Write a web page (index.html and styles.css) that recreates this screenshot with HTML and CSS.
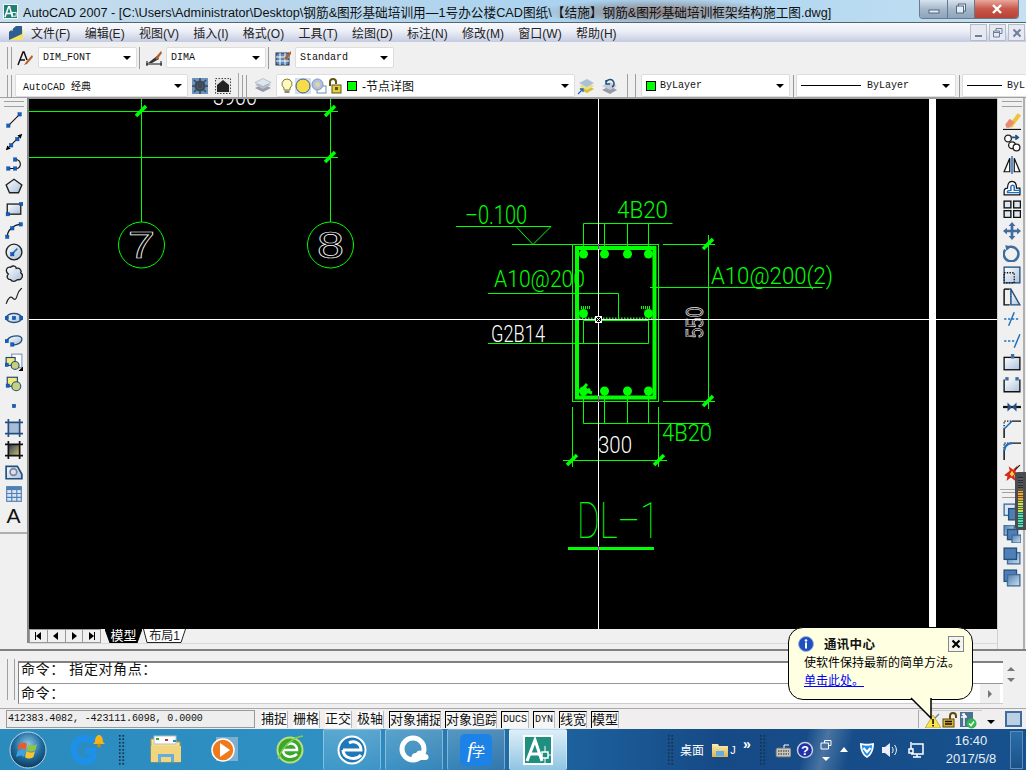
FILE: index.html
```html
<!DOCTYPE html>
<html lang="zh-CN">
<head>
<meta charset="utf-8">
<title>AutoCAD 2007</title>
<link rel="stylesheet" href="styles.css">
</head>
<body>
<svg class="defs" aria-hidden="true"><defs>
<linearGradient id="pale" x1="0" y1="0" x2="1" y2="1"><stop offset="0" stop-color="#fff"/><stop offset="1" stop-color="#a9c0da"/></linearGradient>
<linearGradient id="dark" x1="0" y1="0" x2="1" y2="1"><stop offset="0" stop-color="#23345c"/><stop offset="1" stop-color="#d4c46a"/></linearGradient>
<radialGradient id="orb" cx=".5" cy=".35" r=".7"><stop offset="0" stop-color="#8ecbea"/><stop offset=".55" stop-color="#1e6a9c"/><stop offset="1" stop-color="#0c2f50"/></radialGradient>
<linearGradient id="fold" x1="0" y1="0" x2="0" y2="1"><stop offset="0" stop-color="#fbeeb0"/><stop offset="1" stop-color="#dfb24e"/></linearGradient>
<linearGradient id="sq" x1="0" y1="0" x2="1" y2="1"><stop offset="0" stop-color="#4f7fb4"/><stop offset="1" stop-color="#cfe0ea"/></linearGradient>
</defs></svg>

<div class="app">
  <header class="title">
    <svg class="logo" viewBox="0 0 16 16"><rect width="16" height="16" fill="#fff"/><rect x="1" y="1" width="14" height="14" fill="#1f7f72"/><path class="w15" d="M2 14 6 3h1l3 11M4 10h5"/><rect class="wbox" x="10" y="9" width="4" height="4"/></svg>
    <span class="title-text">AutoCAD 2007 - [C:\Users\Administrator\Desktop\钢筋&amp;图形基础培训用—1号办公楼CAD图纸\【结施】钢筋&amp;图形基础培训框架结构施工图.dwg]</span>
    <div class="winbtns">
      <div class="wb wb-min"><svg viewBox="0 0 12 12" class="wg"><rect x="1" y="7" width="10" height="3" class="wgl"/></svg></div>
      <div class="wb wb-max"><svg viewBox="0 0 12 12" class="wg"><rect x="3.5" y="1" width="7" height="7" class="wgl"/><rect x="1.5" y="3" width="7" height="7" class="wgl"/></svg></div>
      <div class="wb wb-close"><svg viewBox="0 0 12 12" class="wg"><path class="wx" d="M2 2 10 10M10 2 2 10"/></svg></div>
    </div>
  </header>

  <nav class="menu">
    <svg class="menu-ic" viewBox="0 0 16 16"><path d="M1 15V6L10 1l5 4v10z" fill="#f5e15a"/><path d="M1 7 8 1h6v8L1 15z" fill="#2f5f92"/><path d="M4 3l1 1M3 5h2" class="wline"/></svg>
    <span class="mi">文件(F)</span><span class="mi">编辑(E)</span><span class="mi">视图(V)</span><span class="mi">插入(I)</span><span class="mi">格式(O)</span><span class="mi">工具(T)</span><span class="mi">绘图(D)</span><span class="mi">标注(N)</span><span class="mi">修改(M)</span><span class="mi">窗口(W)</span><span class="mi">帮助(H)</span>
    <div class="mdi">
      <div class="mdb"><svg viewBox="0 0 12 12"><rect x="2" y="8" width="7" height="2" fill="#6f7f9a"/></svg></div>
      <div class="mdb"><svg viewBox="0 0 12 12"><path class="mdg" d="M4 3.5V1.5h6v5H8M1.5 4h6v6h-6zM1.5 5.5h6"/></svg></div>
      <div class="mdb"><svg viewBox="0 0 12 12"><path class="mdx" d="M2.5 2.5 9.5 9.5M9.5 2.5 2.5 9.5"/></svg></div>
    </div>
  </nav>

  <section class="tbrow tbrow1">
    <div class="grip"></div>
    <svg class="ic16 ml5" viewBox="0 0 16 16"><path class="k15" d="M1 15 6 2h1l3 8M3 10h5"/><path d="M15 5 9 12l-2 3 3-1 6-7z" fill="#b0602a"/></svg>
    <div class="combo w99 ml5"><span class="mono">DIM_FONT</span><i class="arr"></i></div>
    <div class="sep"></div>
    <svg class="ic16 ml6" viewBox="0 0 16 16"><path class="k1" d="M0 14H16M1 11V16M15 11V16"/><path d="M2 13 11 6l2 3-7 4z" fill="#333"/><path d="M15 1 9 8l2 2 5-7z" fill="#b0602a"/></svg>
    <div class="combo w100 ml4"><span class="mono">DIMA</span><i class="arr"></i></div>
    <div class="sep"></div>
    <svg class="ic16 ml6" viewBox="0 0 16 16"><rect x="1" y="3" width="13" height="12" fill="#5f86b8" stroke="#234"/><path class="wline" d="M1 7h13M1 11h13M5 3v12M10 3v12"/><path d="M16 1 9 8l2 2 5-6z" fill="#b0602a"/></svg>
    <div class="combo w99 ml4"><span class="mono">Standard</span><i class="arr"></i></div>
  </section>

  <section class="tbrow tbrow2">
    <div class="grip"></div>
    <div class="combo w173 ml3 tall pad8"><span class="mono">AutoCAD 经典</span><i class="arr"></i></div>
    <svg class="ic16 ml4" viewBox="0 0 16 16"><rect width="16" height="16" fill="#6d94bd"/><circle cx="8" cy="8" r="5.5" fill="#3c4a58"/><circle cx="8" cy="8" r="2.6" fill="#d8e2ee"/><path class="gear" d="M8 0v16M0 8h16M2 2l12 12M14 2 2 14"/></svg>
    <svg class="ic16 ml7" viewBox="0 0 16 16"><rect x=".5" y=".5" width="15" height="15" class="dots"/><path d="M2 14V7l6-5 6 5v7z" fill="#222"/></svg>
    <div class="divider"></div>
    <div class="grip ml3"></div>
    <svg class="ic18 ml7" viewBox="0 0 18 18"><path d="M1 11 9 7l8 4-8 4z" fill="#99a"/><path d="M1 8 9 4l8 4-8 4z" fill="#b6c0cc"/><path d="M1 5.500 9 1.500l8 4-8 4z" fill="#dfe6ee" stroke="#8899aa" stroke-width=".5"/></svg>
    <div class="combo w299 ml4 tall pad2">
      <svg class="ic16" viewBox="0 0 16 16"><path d="M8 1a5 5 0 0 1 3 9v2H5v-2A5 5 0 0 1 8 1z" fill="#fdf9c0" stroke="#8a7a20"/><rect x="5.500" y="12.500" width="5" height="2.500" fill="#888"/></svg>
      <svg class="ic16" viewBox="0 0 16 16"><rect width="16" height="16" fill="#d5dfea"/><circle cx="8" cy="8" r="7" fill="#f7dc4a" stroke="#2e5fa8"/></svg>
      <svg class="ic16" viewBox="0 0 16 16"><rect x="6" y="8" width="9" height="7" fill="#fff" stroke="#6f8aa8"/><circle cx="6.500" cy="6.500" r="5.500" fill="#b5bfe0" stroke="#7f94b8"/><circle cx="6.500" cy="6.500" r="2.500" fill="#dad8a0"/></svg>
      <svg class="ic16" viewBox="0 0 16 16"><path class="lockb" d="M3 8V4a3 3 0 0 1 6 0v2"/><rect x="5" y="7" width="9" height="8" fill="#e0d040" stroke="#5f5510"/><rect x="8" y="9" width="3" height="3" fill="#5f5510"/></svg>
      <i class="sw sw-first"></i>
      <span class="layer-name">-节点详图</span><i class="arr"></i>
    </div>
    <svg class="ic18 ml2" viewBox="0 0 18 18"><path d="M2 12 10 8l7 4-7 4z" fill="#d8c030"/><path d="M2 9 10 5l7 4-7 4z" fill="#e8e090"/><path d="M2 6 10 2l7 4-7 4z" fill="#aac0d4"/><path d="M1 17 6 12M3 12h3v3" class="blue-line"/></svg>
    <svg class="ic18 ml5" viewBox="0 0 18 18"><path d="M2 13 10 9l7 4-7 4z" fill="#99a"/><path d="M2 9 10 5l7 4-7 4z" fill="#c2ccd8"/><path d="M6 7a4 4 0 1 1 6 3M6 3v4h4" class="blue-line2"/></svg>
    <div class="handle2 ml9"></div>
    <div class="combo w149 ml5 tall"><i class="sw"></i><span class="mono ml4">ByLayer</span><i class="arr"></i></div>
    <div class="sep2"></div>
    <div class="combo w160 tall"><i class="ln ln60"></i><span class="mono ml6">ByLayer</span><i class="arr"></i></div>
    <div class="sep2"></div>
    <div class="combo wrest tall"><i class="ln ln35"></i><span class="mono ml5">ByL</span></div>
  </section>

  <main class="work">
    <aside class="side side-left">
      <div class="shandle"></div>
      <svg class="ic" viewBox="0 0 16 16"><path class="k1" d="M3 13 13 3"/><rect class="n" x="1.500" y="11.500" width="3" height="3"/><rect class="n" x="11.500" y="1.500" width="3" height="3"/></svg>
      <svg class="ic" viewBox="0 0 16 16"><path class="k1" d="M1 15 15 1"/><path d="M1 15l1-4 3 3zM15 1l-4 1 3 3z"/><rect class="n" x="4" y="9.500" width="3" height="3"/><rect class="n" x="9.500" y="4" width="3" height="3"/></svg>
      <svg class="ic" viewBox="0 0 16 16"><path class="k1" d="M3 12H10C15 12 15 4 9 4"/><rect class="n" x="1.500" y="10.500" width="3" height="3"/><rect class="n" x="7.500" y="10.500" width="3" height="3"/><rect class="n" x="7.500" y="2.500" width="3" height="3"/></svg>
      <svg class="ic" viewBox="0 0 16 16"><path class="kp" d="M8 2 15 7 12 14H4L1 7Z"/></svg>
      <svg class="ic" viewBox="0 0 16 16"><rect class="kp" x="2" y="4.500" width="12" height="9"/><rect class="n" x="1" y="12" width="3" height="3"/><rect class="n" x="13" y="3" width="3" height="3"/></svg>
      <svg class="ic" viewBox="0 0 16 16"><path class="k1" d="M2 14C2 8 8 3 14 3"/><rect class="n" x=".5" y="12.500" width="3" height="3"/><rect class="n" x="5" y="5" width="3" height="3"/><rect class="n" x="12.500" y="1.500" width="3" height="3"/></svg>
      <svg class="ic" viewBox="0 0 16 16"><circle class="kp" cx="8" cy="8" r="7"/><path class="blue-line" d="M6 10 11 5"/><rect class="n" x="5" y="8.500" width="3" height="3"/></svg>
      <svg class="ic" viewBox="0 0 16 16"><path class="kp" d="M3 8C0 6 1 1 5 2c2-2 5-1 5 1 3-1 5 2 4 4 3 2 1 7-3 6-2 2-5 2-6 0C2 13 1 10 3 8z"/></svg>
      <svg class="ic" viewBox="0 0 16 16"><path class="k1f" d="M1 15C3 9 5 8 7 10S10 11 11 7 14 2 15 1"/></svg>
      <svg class="ic" viewBox="0 0 16 16"><ellipse class="kp2" cx="8" cy="8" rx="7" ry="4"/><rect class="n" x="0" y="6.500" width="3" height="3"/><rect class="n" x="13" y="6.500" width="3" height="3"/><rect class="n" x="6.500" y="6.500" width="3" height="3"/></svg>
      <svg class="ic" viewBox="0 0 16 16"><path class="kp2" d="M2 9C1 5 14 2 15 7 15 11 9 13 6 12"/><rect class="n" x="0" y="7.500" width="3" height="3"/><rect class="n" x="5" y="10.500" width="3" height="3"/></svg>
      <svg class="ic" viewBox="0 0 16 16"><rect x="6" y="1" width="9" height="12" fill="#fff" stroke="#7f98b8"/><rect x="1" y="4" width="8" height="7" fill="#f0ea78" stroke="#1c3f80"/><circle cx="9" cy="11" r="3.500" fill="#c7cf80" stroke="#24527a"/><rect class="n" x="0" y="9" width="3" height="3"/><path d="M16 16V12l-4 4z"/></svg>
      <svg class="ic" viewBox="0 0 16 16"><rect x="2" y="2" width="9" height="8" fill="#f0ea78" stroke="#1c3f80"/><circle cx="10" cy="10" r="4" fill="#c7cf80" stroke="#24527a"/><rect class="n" x="1" y="8" width="3" height="3"/></svg>
      <svg class="ic" viewBox="0 0 16 16"><rect class="n" x="6.500" y="6.500" width="3" height="3"/></svg>
      <svg class="ic" viewBox="0 0 16 16"><rect x="3" y="3" width="10" height="10" class="hat"/><path class="nv" d="M0 3H16M0 13H16M3 0V16M13 0V16"/></svg>
      <svg class="ic" viewBox="0 0 16 16"><rect x="3" y="3" width="10" height="10" fill="url(#dark)"/><path class="kk" d="M0 3H16M0 13H16M3 0V16M13 0V16"/></svg>
      <svg class="ic" viewBox="0 0 16 16"><path class="reg" d="M1 3H11L15 10V14H1Z"/><circle class="regc" cx="7.500" cy="8" r="3"/></svg>
      <svg class="ic" viewBox="0 0 16 16"><rect x="1.500" y="1.500" width="13" height="13" fill="#d8e4f4" stroke="#4f7fb4"/><rect x="1.500" y="1.500" width="13" height="3" fill="#4f7fb4"/><path class="tabl" d="M1.500 7.500h13M1.500 11h13M6 4.500v10M10.500 4.500v10"/></svg>
      <span class="glyphA">A</span>
      <div class="sbot"></div>
    </aside>

    <div class="center">
      <svg class="cad" viewBox="29 99 968 530" aria-label="drawing">
        <rect class="bk" x="29" y="99" width="968" height="530"/>
        <rect class="wh" x="929" y="99" width="7" height="530"/>
        <g class="g1">
          <path d="M29 111.500H338M29 157.500H338M141.500 99V222M330.500 99V222"/>
          <circle cx="141.500" cy="245" r="23"/>
          <circle cx="330.500" cy="245" r="23"/>
          <path d="M456 226.500H551M516 226.500 533 244.500 551 226.500M512 244.500H572.500"/>
          <rect x="572.500" y="244.500" width="86" height="157"/>
          <path d="M583.500 223.500H672.500M583.500 223.500V254M604.500 223.500V254M627.500 223.500V254M648.500 223.500V254"/>
          <path d="M663 244.500H715M663 401.500H715M708.500 235V409"/>
          <path d="M650 287.500H822.500"/>
          <path d="M488 293.500H618.500V318"/>
          <path d="M583.500 320.500H648.500M488 343.500H648.500V320.500M583.500 320.500V343.500"/>
          <path d="M583.500 391V423.500H709M604.500 391V423.500M627.500 391V423.500M648.500 391V423.500"/>
          <path d="M572.500 407V467M658.500 407V467M563 460.500H667"/>
        </g>
        <rect class="thick" x="577" y="248" width="77.500" height="149.500"/>
        <g class="bars">
          <circle cx="583.500" cy="254" r="4.500"/><circle cx="604.500" cy="254" r="4.500"/><circle cx="627.500" cy="254" r="4.500"/><circle cx="648.500" cy="254" r="4.500"/>
          <circle cx="583.500" cy="313.500" r="4.500"/><circle cx="648.500" cy="313.500" r="4.500"/>
          <circle cx="583.500" cy="391" r="4.500"/><circle cx="604.500" cy="391" r="4.500"/><circle cx="627.500" cy="391" r="4.500"/><circle cx="648.500" cy="391" r="4.500"/>
        </g>
        <path class="hook" d="M580 392 587 384M583 390 592 393M582 396 590 389"/>
        <path class="dot" d="M579 318.500H655"/>
        <path class="dot2" d="M581 307.500H591M641 307.500H651M578 310V318M654 310V318"/>
        <path class="tick" d="M136 116 146 106M325 116 335 106M325 162 335 152M703 249 713 239M703 406 713 396M567 465 577 455M654 465 664 455"/>
        <rect class="und" x="568" y="547" width="86" height="3"/>
        <text class="ct g" x="465" y="224" font-size="25" textLength="62" lengthAdjust="spacingAndGlyphs">–0.100</text>
        <text class="ct g" x="617" y="218" font-size="24" textLength="51" lengthAdjust="spacingAndGlyphs">4B20</text>
        <text class="ct g" x="494" y="287" font-size="24" textLength="91" lengthAdjust="spacingAndGlyphs">A10@200</text>
        <text class="ct g" x="711" y="284" font-size="24" textLength="122" lengthAdjust="spacingAndGlyphs">A10@200(2)</text>
        <text class="ct g" x="662" y="441" font-size="24" textLength="50" lengthAdjust="spacingAndGlyphs">4B20</text>
        <text class="ct g thin" x="577" y="538" font-size="50" textLength="82" lengthAdjust="spacingAndGlyphs">DL–1</text>
        <text class="ct w" x="491" y="342" font-size="24" textLength="54" lengthAdjust="spacingAndGlyphs">G2B14</text>
        <text class="ct w" x="598" y="453" font-size="24" textLength="34" lengthAdjust="spacingAndGlyphs">300</text>
        <text class="ct w" x="213" y="105" font-size="24" textLength="44" lengthAdjust="spacingAndGlyphs">3900</text>
        <text class="ol" x="128" y="258" font-size="37" textLength="27" lengthAdjust="spacingAndGlyphs">7</text>
        <text class="ol" x="317" y="258" font-size="37" textLength="27" lengthAdjust="spacingAndGlyphs">8</text>
        <text class="ol" transform="translate(703 338) rotate(-90)" font-size="24" textLength="31" lengthAdjust="spacingAndGlyphs">550</text>
        <path class="cross" d="M29 319.500H997M598.500 99V629"/>
        <rect class="pick" x="595.500" y="316.500" width="6" height="6"/>
        <path class="pickx" d="M595.500 316.500 601.500 322.500M601.500 316.500 595.500 322.500"/>
        <path class="mag" d="M598.500 244V249M598.500 396V402M598.500 546V550"/>
      </svg>
      <div class="tabs">
        <div class="navs">
          <span class="nb"><svg viewBox="0 0 10 10"><path d="M2 1h1v8H2zM8 1v8L3 5z"/></svg></span>
          <span class="nb"><svg viewBox="0 0 10 10"><path d="M7 1v8L2 5z"/></svg></span>
          <span class="nb"><svg viewBox="0 0 10 10"><path d="M3 1v8l5-4z"/></svg></span>
          <span class="nb"><svg viewBox="0 0 10 10"><path d="M2 1v8l5-4zM7 1h1v8H7z"/></svg></span>
        </div>
        <span class="tab tab-on"><svg class="tabshape" viewBox="0 0 37 14"><path class="ts-on" d="M0 0 5 14H32L37 0"/></svg><b class="tabt">模型</b></span>
        <span class="tab tab-off"><svg class="tabshape" viewBox="0 0 43 14"><path class="ts-off" d="M.5 0 4 13.500H38L42.500 0"/></svg><b class="tabt">布局1</b></span>
      </div>
    </div>

    <aside class="side side-right">
      <div class="shandle"></div>
      <svg class="ic" viewBox="0 0 16 16"><path d="M5 12 13 1l3 2-8 11z" fill="#efc23a"/><path d="M2 11 6 6l4 3-4 5H3z" fill="#e88a72"/><path class="k1" d="M0 15.500H16"/></svg>
      <svg class="ic" viewBox="0 0 16 16"><circle class="kc" cx="4.500" cy="4" r="3"/><circle class="kc" cx="8" cy="10" r="3"/><circle class="kc" cx="12" cy="12" r="3"/><path class="blue-line2" d="M7 3H13M11 1l2.500 2L11 5"/></svg>
      <svg class="ic" viewBox="0 0 16 16"><path class="kn" d="M6 2 1 14H6ZM10 2 15 14H10Z"/><path class="blue-line" d="M8 0V16"/></svg>
      <svg class="ic" viewBox="0 0 16 16"><path class="kn" d="M1 15V12C1 9 3 9 4 9 4 6 5 3 8 3S12 6 12 9H15V15Z"/><path class="blue-line" d="M4 13V12C4 11 6 11 7 11V8C7 6 10 6 10 8V11H15V13Z"/></svg>
      <svg class="ic" viewBox="0 0 16 16"><rect class="kn2" x="1" y="1" width="6" height="6"/><rect class="kn2" x="9.500" y="1" width="6" height="6"/><rect class="kn2" x="1" y="9.500" width="6" height="6"/><rect class="kn2" x="9.500" y="9.500" width="6" height="6"/></svg>
      <svg class="ic" viewBox="0 0 16 16"><path d="M8 0 11 3.500H9.200V6.800H12.500V5L16 8 12.500 11V9.200H9.200V12.500H11L8 16 5 12.500H6.800V9.200H3.500V11L0 8 3.500 5V6.800H6.800V3.500H5Z" fill="#3f6d9f"/></svg>
      <svg class="ic" viewBox="0 0 16 16"><path class="rot" d="M6 2.500A6.500 6.500 0 1 1 2 5"/><path d="M2 1 8 2 3 6z" fill="#3f6d9f"/></svg>
      <svg class="ic" viewBox="0 0 16 16"><rect class="regf" x="1" y="1" width="14" height="14"/><rect class="dotk" x="1" y="6" width="9" height="9"/></svg>
      <svg class="ic" viewBox="0 0 16 16"><path class="kk2" d="M1 1V15H6"/><path class="kk2" d="M1 1H6"/><path class="regf" d="M7 1 15 15H7Z"/><path class="dotb" d="M7 1V15"/></svg>
      <svg class="ic" viewBox="0 0 16 16"><path class="blue-dash" d="M1 8H15"/><path class="blue-line" d="M5 14 10 2"/></svg>
      <svg class="ic" viewBox="0 0 16 16"><path class="blue-dash" d="M1 8H10"/><path class="blue-line" d="M10 14 15 2"/></svg>
      <svg class="ic" viewBox="0 0 16 16"><rect class="kf" x="1" y="3" width="14" height="11"/><rect class="nl" x="7" y="0" width="3" height="4"/></svg>
      <svg class="ic" viewBox="0 0 16 16"><path class="kf" d="M1 3V14H15V3"/><rect class="nl" x="2" y="1" width="3" height="3"/><rect class="nl" x="11" y="1" width="3" height="3"/></svg>
      <svg class="ic" viewBox="0 0 16 16"><path class="k2" d="M0 8H16"/><path d="M4 4 8 8 4 12zM12 4 8 8 12 12z" fill="#24507f"/></svg>
      <svg class="ic" viewBox="0 0 16 16"><path class="kk2" d="M1 16V8M8 1H16"/><path class="dotk" d="M1 8V1H8"/><path class="blue-line" d="M1 8 8 1"/></svg>
      <svg class="ic" viewBox="0 0 16 16"><path class="kk2" d="M1 16V8M8 1H16"/><path class="dotk" d="M1 8V1H8"/><path class="blue-thick" d="M1 8C1 4 4 1 8 1"/></svg>
      <svg class="ic" viewBox="0 0 16 16"><path d="M1 10 6 6 5 2 9 5 13 1 11 7 15 9 10 10 11 15 7 12 3 15 4 11z" fill="#d62a1a"/><path d="M6 9 8 6 10 9 8 11z" fill="#f6d94a"/><path class="k1" d="M11 5 15 1"/></svg>
      <div class="subdiv"></div>
      <div class="shandle"></div>
      <svg class="ic" viewBox="0 0 16 16"><rect class="oS" x="1" y="1" width="10" height="10"/><rect class="oB" x="5" y="5" width="10" height="10"/></svg>
      <svg class="ic" viewBox="0 0 16 16"><rect class="oL" x="1" y="0" width="9" height="9"/><rect class="oB" x="4" y="4" width="9" height="9"/><rect class="oL" x="8" y="9" width="8" height="7"/></svg>
      <svg class="ic" viewBox="0 0 16 16"><rect class="oL" x="4" y="5" width="11" height="10"/><rect class="oB" x="1" y="1" width="11" height="10"/></svg>
      <svg class="ic" viewBox="0 0 16 16"><rect class="oB" x="1" y="1" width="11" height="10"/><rect class="oL" x="4" y="5" width="11" height="10"/></svg>
    </aside>
  </main>

  <section class="cmd">
    <div class="cmd-grip"></div>
    <div class="cmd-box">
      <div class="cmd-line cmd-hist">命令： 指定对角点：</div>
      <div class="cmd-line cmd-now"><span>命令：</span><span class="hscroll"><i class="rgt"></i></span></div>
    </div>
    <div class="cmd-scroll"><i class="up"></i><i class="down"></i></div>
  </section>

  <section class="status">
    <div class="coords">412383.4082, -423111.6098, 0.0000</div>
    <span class="sb s27">捕捉</span><span class="sb s27">栅格</span><span class="sb s27">正交</span><span class="sb s27">极轴</span>
    <span class="sb on s52">对象捕捉</span><span class="sb on s52">对象追踪</span><span class="sb on s28 mono">DUCS</span><span class="sb on s22 mono">DYN</span><span class="sb on s28">线宽</span><span class="sb on s28">模型</span>
    <div class="tray">
      <svg class="ic16" viewBox="0 0 16 16"><path d="M2 2 14 14M14 2 2 14" class="tr-x"/><path d="M8 3 16 16H0Z" fill="#fbe34a" stroke="#8a7a20" stroke-width=".5"/><rect x="7.300" y="7" width="1.500" height="5"/><rect x="7.300" y="13" width="1.500" height="1.500"/></svg>
      <svg class="ic16" viewBox="0 0 16 16"><path class="lockb2" d="M8 7V4a3 3 0 0 1 6 0v2"/><rect x="1" y="7" width="11" height="8" fill="#d9b430" stroke="#5f4a10"/><path class="kk" d="M3 9.500h7M3 12h7"/></svg>
      <svg class="ic18" viewBox="0 0 18 18"><rect x="1" y="1" width="13" height="15" fill="#4a7094"/><path class="wline2" d="M5 2V15M2 6h6M3 3l4 2"/><circle cx="12.500" cy="12.500" r="5" fill="#2db84a"/><path class="wline2" d="M10 12.500l2 2 3-4"/></svg>
    </div>
    <i class="arr st-arr"></i>
    <div class="clean"></div>
  </section>

  <footer class="taskbar">
    <div class="pins">
      <div class="pin p-orb"><svg class="orb" viewBox="0 0 38 38"><circle cx="19" cy="19" r="18" fill="url(#orb)" stroke="#b8d8e8"/><path d="M10 13c3-2 6-2 8 0l-1.500 6c-2-2-5-2-8 0z" fill="#ea5b2a"/><path d="M19 13c3 2 6 2 9 0l-1.500 6c-3 2-6 2-8.500 0z" fill="#8fc53f"/><path d="M8.500 20c3-2 6-2 8 0L15 26c-2-2-5-2-8 0z" fill="#3ba3e0"/><path d="M17.500 20c3 2 6 2 8.500 0L24.500 26c-3 2-6 2-8.500 0z" fill="#f9c52a"/></svg></div>
      <div class="pin p-g"><svg class="pic40" viewBox="0 0 40 40"><path class="g-logo" d="M28 12C24 6 10 7 9 19 8 31 22 35 28 28V21H20"/><path d="M30 12c0-5 2-7 4-7s4 2 4 7l2 2H28z" fill="#f4b41a"/><circle cx="34" cy="15.500" r="2" fill="#c98a10"/></svg></div>
      <div class="pin p-grip"><i class="dotgrip"></i></div>
      <div class="pin p-fold"><svg class="pic32" viewBox="0 0 32 32"><path d="M1 5h12l2 3h15v20H1z" fill="url(#fold)" stroke="#b99540"/><rect x="4" y="2" width="22" height="8" fill="#fff" stroke="#bbb"/><rect x="6" y="4" width="3" height="2" fill="#3a3"/><rect x="15" y="5" width="3" height="2" fill="#b33"/><rect x="23" y="6" width="3" height="2" fill="#28c"/><path d="M1 12h30v16H1z" fill="#f2d57f"/><path d="M8 28v-8h16v8h-3v-5H11v5z" fill="#62aee0"/></svg></div>
      <div class="pin p-media"><svg class="pic32" viewBox="0 0 32 32"><rect x="7" y="3" width="22" height="24" fill="#9ab8d4" opacity=".75"/><circle cx="14" cy="16" r="11" fill="#ef7a1c" stroke="#fff" stroke-width="1.500"/><path d="M11 9 21 16 11 23z" fill="#fff"/></svg></div>
      <div class="pin p-ie"><svg class="pic32" viewBox="0 0 32 32"><circle cx="16" cy="16" r="12.500" fill="#3aa72e" stroke="#bde07a" stroke-width="2"/><path class="ie-e" d="M9 16H23C23 10 17 8 13 11M9 16C9 23 18 25 23 20"/><path class="ie-orb" d="M4 25C9 11 20 3 29 2"/></svg></div>
      <div class="task"><svg class="pic32" viewBox="0 0 32 32"><circle cx="16" cy="16" r="13.500" class="ie-ring"/><path class="ie-e2" d="M7 16H25C25 9 18 6 13 9M7 16C7 25 20 27 25 21"/></svg></div>
      <div class="task"><svg class="pic32" viewBox="0 0 32 32"><circle cx="15" cy="15" r="11" class="q-ring"/><path d="M14 25a4 4 0 0 1 4-6 5 5 0 0 1 9 1 3 3 0 0 1 1 6H15z" fill="#fff"/></svg></div>
      <div class="task"><div class="xue"><span class="xue-f">f</span><span class="xue-t">学</span></div></div>
      <div class="task task-last"><svg class="pic32" viewBox="0 0 32 32"><rect x="1" y="1" width="30" height="30" fill="#fff"/><rect x="3" y="3" width="26" height="26" fill="#1f8f80"/><path class="w3" d="M5 27 13 6 20 27M8 20H19"/><rect class="wbox2" x="20" y="18" width="6" height="6"/><path class="wline" d="M16 21h4M26 21h3M23 18v-6M23 24v5"/></svg></div>
    </div>
    <div class="sysbar">
      <i class="dotgrip dg1"></i>
      <span class="tb-desk">桌面</span>
      <svg class="ic16 tb-f" viewBox="0 0 16 16"><path d="M0 2h6l1 2h9v11H0z" fill="url(#fold)"/><rect x="4" y="9" width="8" height="5" fill="#62aee0"/></svg>
      <span class="tb-j">J</span>
      <span class="tb-more">»</span>
      <i class="dotgrip dg2"></i>
      <svg class="ic16 t-kbd" viewBox="0 0 16 16"><rect x="1" y="6" width="15" height="9" rx="1.500" fill="#c8c8c0" stroke="#666"/><path class="kbdk" d="M3 9h11M3 12h11"/><path class="wline" d="M9 6V3h5"/></svg>
      <svg class="ic18 t-help" viewBox="0 0 18 18"><circle cx="9" cy="9" r="7.500" fill="#2030a8" stroke="#c8d0d8" stroke-width="1.500"/><text class="q" x="9" y="13.500">?</text></svg>
      <div class="t-small"><svg class="ic12" viewBox="0 0 12 12"><path class="wline" d="M4.500 4V1.500H11v5H8.500M1 4h7.500v6H1z"/></svg><i class="dn"></i></div>
      <i class="upt"></i>
      <svg class="ic18 t-sh" viewBox="0 0 18 18"><path d="M2 2C6 3 12 3 16 2 16 9 14 14 9 17 4 14 2 9 2 2Z" fill="#fff"/><path d="M4 4C7 5 11 5 14 4 14 9 12 13 9 15 6 13 4 9 4 4Z" fill="#1f8be8"/><path class="wth" d="M5.500 7 9 11l3.500-4"/></svg>
      <svg class="ic18 t-sp" viewBox="0 0 18 18"><path d="M1 6h3l5-4v14l-5-4H1z" fill="#eef"/><path class="wline" d="M11 6c1.500 2 1.500 4 0 6M13.500 4c2.500 3 2.500 7 0 10"/></svg>
      <svg class="ic18 t-nw" viewBox="0 0 18 18"><path class="wline2" d="M5 3h11v10H4M10 13v3H6h8M4 8V1M2 8h4v4H2z"/></svg>
      <div class="clock"><span>16:40</span><span>2017/5/8</span></div>
      <div class="showdesk"></div>
    </div>
  </footer>

  <div class="meter"><i class="meter-bars"></i></div>

  <aside class="bubble">
    <svg class="b-tail" viewBox="0 0 24 22"><path class="b-tail-f" d="M1 0 21 20 21 0Z"/><path class="b-tail-s" d="M1 0 21 20 21 0"/></svg>
    <div class="b-head">
      <svg class="b-info" viewBox="0 0 16 16"><circle cx="8" cy="8" r="7.500" fill="#1e50c0" stroke="#9db4dc"/><circle cx="8" cy="4.500" r="1.300" fill="#fff"/><rect x="7" y="6.500" width="2" height="6" fill="#fff"/></svg>
      <strong class="b-title">通讯中心</strong>
      <span class="b-close"><svg viewBox="0 0 10 10"><path class="b-x" d="M1.500 1.500 8.500 8.500M8.500 1.500 1.500 8.500"/></svg></span>
    </div>
    <p class="b-msg">使软件保持最新的简单方法。</p>
    <a class="b-link" href="#">单击此处。</a>
  </aside>
</div>
</body>
</html>
```

FILE: styles.css
```css
*{box-sizing:border-box}
html,body{margin:0;padding:0;width:1026px;height:770px;overflow:hidden;background:#f0f0f0}
body{font-family:"Liberation Sans","Noto Sans CJK SC",sans-serif;font-size:12px;color:#111}
.defs{position:absolute;width:0;height:0}
.app{position:relative;width:1026px;height:770px;display:flex;flex-direction:column;overflow:hidden}

.title{height:22px;display:flex;align-items:center;padding-left:3px;
  background:radial-gradient(ellipse 125px 13px at 660px 12px,rgba(120,70,50,.62),rgba(120,70,50,0) 100%),linear-gradient(90deg,#c6deef,#b8d6ec 30%,#a7d2f0 60%,#c5e0f2 100%)}
.logo{width:15px;height:15px;flex:none}
.title-text{margin-left:5px;font-size:12.68px;color:#111;white-space:nowrap}
.winbtns{margin-left:auto;margin-right:7px;display:flex;align-self:flex-start;height:19px;flex:none;border:1px solid #6b7b8d;border-top:0;border-radius:0 0 4px 4px;overflow:hidden}
.wb{display:flex;align-items:center;justify-content:center;height:100%;background:linear-gradient(#d8e3ee,#a5b8cb 50%,#8ea4ba)}
.wb-min{width:28px;border-right:1px solid #66788c}
.wb-max{width:27px;border-right:1px solid #66788c}
.wb-close{width:43px;background:linear-gradient(#e8a89c,#c8574a 50%,#b84134)}
.wg{width:12px;height:12px}
.wgl{fill:#e6edf4;stroke:#54687e}
.wx{fill:none;stroke:#fff;stroke-width:2.4}

.menu{height:20px;display:flex;align-items:center;gap:14.3px;padding-left:8px;border-top:1px solid #566;background:linear-gradient(#f8f9fd,#eef0f8 40%,#c4cce2)}
.menu-ic{width:16px;height:16px;flex:none;margin-right:-7.300px}
.mi{font-size:12px;white-space:nowrap;color:#222}
.mdi{margin-left:auto;display:flex;gap:2px;margin-right:1px}
.mdb{width:17px;height:17px;border:1px solid #b4bccc;background:#e6e9f2;display:flex;align-items:center;justify-content:center}
.mdb svg{width:12px;height:12px}
.mdg{fill:none;stroke:#6f7f9a}
.mdx{fill:none;stroke:#6f7f9a;stroke-width:2}

.tbrow{display:flex;align-items:center;background:#f0f0f0;padding-left:7px}
.tbrow1{height:29px;padding-top:2px}
.tbrow2{height:27px;padding-top:3px;border-bottom:1px solid #a0a0a0}
.grip{width:5px;height:22px;flex:none;border-left:1px solid #a0a0a0;border-right:1px solid #a0a0a0}
.handle2{width:9px;height:24px;flex:none;border-left:1px solid #a0a0a0;border-right:1px solid #a0a0a0}
.sep,.sep2{width:1px;height:22px;background:#999;flex:none}
.sep{margin-left:2px}
.sep2{margin:0 2.500px}
.divider{width:1px;height:26px;background:#aaa;flex:none;margin-left:7px}
.combo{height:21px;flex:none;background:#fff;border:1px solid #ddd;border-radius:2px;display:flex;align-items:center;padding-left:4px;padding-right:5px;overflow:hidden}
.combo.tall{height:23px}
.combo.pad8{padding-left:7px}
.combo.pad2{padding-left:2px}
.w99{width:99px}.w100{width:100px}.w173{width:173px}.w299{width:299px}.w149{width:149px}.w160{width:160px}.wrest{width:64px;border-right:0}
.mono{font-family:"Liberation Mono","Noto Sans CJK SC",monospace;font-size:10px;white-space:nowrap;color:#111}
.arr{margin-left:auto;width:0;height:0;border-left:4px solid transparent;border-right:4px solid transparent;border-top:4px solid #000;flex:none}
.ml2{margin-left:2px}.ml3{margin-left:3px}.ml4{margin-left:4px}.ml5{margin-left:5px}.ml6{margin-left:6px}.ml7{margin-left:7px}.ml9{margin-left:9px}
.ic16{width:16px;height:16px;flex:none}
.ic18{width:18px;height:18px;flex:none}
.ic12{width:12px;height:12px;flex:none;display:block}
.sw{width:10px;height:10px;background:#0f0;border:1px solid #000;flex:none}
.sw-first{margin-left:4px}
.layer-name{font-size:12px;margin-left:5px;white-space:nowrap}
.ln{height:1px;background:#000;flex:none;display:block}
.ln60{width:60px}.ln35{width:35px}

.work{height:551px;display:flex;align-items:flex-start;background:#f0f0f0}
.side{display:flex;flex-direction:column;align-items:center;flex:none}
.side-left{width:29px;height:545px;padding-top:3px;border-right:2px solid #888}
.side-left .shandle{margin-bottom:2px}
.side-right{width:29px;padding:3px 3px 0 2px;height:551px;border-left:1px solid #d0d0d0}
.side-right::after{content:"";position:absolute;left:1023px;top:98px;width:2px;height:551px;background:#b0b0b0}
.shandle{width:20px;height:6px;border-top:1px solid #a0a0a0;border-bottom:1px solid #a0a0a0;flex:none;margin-bottom:3px}
.ic{width:18px;height:18px;margin:2px 0;flex:none}
.glyphA{font-size:21px;height:22px;line-height:22px;color:#111}
.sbot{width:100%;height:2px;background:#b0b0b0;margin-top:5px;flex:none}
.subdiv{width:100%;height:1px;background:#aaa;margin:5px 0 2px;flex:none}

.n{fill:#1160c4;stroke:#0a3f8a;stroke-width:.4}
.nl{fill:#3f6d9f}
.k1{fill:none;stroke:#111;stroke-width:1}
.k1f{fill:none;stroke:#222;stroke-width:1}
.k15{fill:none;stroke:#111;stroke-width:1.500}
.k2{fill:none;stroke:#111;stroke-width:2}
.kk{fill:none;stroke:#111;stroke-width:1.500}
.kk2{fill:none;stroke:#111;stroke-width:1.300}
.kp{fill:url(#pale);stroke:#222;stroke-width:1.200}
.kp2{fill:url(#pale);stroke:#24527a;stroke-width:1.200}
.kc{fill:#fff;stroke:#222;stroke-width:1.200}
.kn{fill:#fff;stroke:#111;stroke-width:1.100}
.kn2{fill:#dce7f2;stroke:#111;stroke-width:1.200}
.kf{fill:url(#pale);stroke:#111;stroke-width:1.200}
.blue-line{fill:none;stroke:#1f6fc0;stroke-width:1.300}
.blue-line2{fill:none;stroke:#24507f;stroke-width:1.500}
.blue-thick{fill:none;stroke:#1f6fc0;stroke-width:2}
.blue-dash{fill:none;stroke:#1f6fc0;stroke-width:1.200;stroke-dasharray:2 1.500}
.hat{fill:#a8bcd8;stroke:none}
.nv{fill:none;stroke:#24507f;stroke-width:1.500}
.reg{fill:url(#pale);stroke:#24507f;stroke-width:1.500}
.regc{fill:#dde;stroke:#789;stroke-width:1.500}
.regf{fill:url(#pale);stroke:#24507f;stroke-width:1.200}
.tabl{fill:none;stroke:#4f7fb4;stroke-width:1}
.rot{fill:none;stroke:#3f6d9f;stroke-width:2.200}
.dotk{fill:none;stroke:#111;stroke-width:1.200;stroke-dasharray:1.200 1.200}
.dotb{fill:none;stroke:#24507f;stroke-width:1;stroke-dasharray:1 1}
.oS{fill:#dce7f2;stroke:#3f6d9f;stroke-width:1.200}
.oB{fill:#4f7fb4;stroke:#24507f;stroke-width:1.200}
.oL{fill:url(#sq);stroke:#3f6d9f;stroke-width:1.200}
.gear{stroke:#3c4a58;stroke-width:1.600;fill:none}
.dots{fill:#e6e6e6;stroke:#444;stroke-dasharray:1.500 1.500}
.lockb{fill:none;stroke:#5f5510;stroke-width:2}
.wline{fill:none;stroke:#fff;stroke-width:1}
.wline2{fill:none;stroke:#fff;stroke-width:1.500}
.w15{fill:none;stroke:#fff;stroke-width:1.600}
.w3{fill:none;stroke:#fff;stroke-width:3}
.wbox{fill:#1f7f72;stroke:#fff}
.wbox2{fill:#1f8f80;stroke:#fff;stroke-width:1.500}

.center{width:968px;flex:none;display:flex;flex-direction:column;border-top:1px solid #a0a0a0}
.cad{display:block;width:968px;height:530px;flex:none}
.bk{fill:#000}.wh{fill:#fff}
.g1{fill:none;stroke:#0f0;stroke-width:1}
.thick{fill:none;stroke:#0f0;stroke-width:4}
.bars circle{fill:#0f0}
.hook{fill:none;stroke:#0f0;stroke-width:3}
.dot{fill:none;stroke:#0f0;stroke-width:2;stroke-dasharray:1.500 1.500}
.dot2{fill:none;stroke:#0f0;stroke-width:3;stroke-dasharray:1 1}
.tick{fill:none;stroke:#0f0;stroke-width:3.500}
.und{fill:#0f0}
.ct{font-family:Roboto,"Liberation Sans",sans-serif;font-weight:300}
.ct.thin{font-weight:100}
.ct.g{fill:#0f0}
.ct.w{fill:#fff}
.ol{font-family:"Liberation Sans",sans-serif;fill:#000;stroke:#fff;stroke-width:.7}
.cross{fill:none;stroke:#fff;stroke-width:1}
.pick{fill:#000;stroke:#fff}
.pickx{fill:none;stroke:#fff;stroke-width:1}
.mag{fill:none;stroke:#f0f;stroke-width:1}

.tabs{height:15px;display:flex;align-items:flex-start;background:#f0f0f0;border-bottom:1px solid #d8d8d8}
.navs{display:flex;width:72px;height:14px;border:1px solid #999;background:#f0f0f0;flex:none}
.nb{flex:1;border-right:1px solid #999;display:flex;align-items:center;justify-content:center}
.nb:last-child{border-right:0}
.nb svg{width:10px;height:10px}
.tab{position:relative;height:14px;line-height:14px;font-size:13px;text-align:center;flex:none;display:block}
.tabshape{position:absolute;left:0;top:0;width:100%;height:14px}
.ts-on{fill:#000;stroke:#000}
.ts-off{fill:#fff;stroke:#222}
.tabt{position:relative;font-weight:normal}
.tab-on{width:37px;margin-left:4px;color:#fff}
.tab-off{width:43px;margin-left:1px;color:#222;font-size:12px}

.cmd{height:59px;display:flex;align-items:flex-start;border-top:2px solid #808080;padding:10px 8px 0 7px;background:#f0f0f0}
.cmd-grip{width:8px;height:41px;flex:none;border-left:1px solid #a0a0a0;border-right:1px solid #a0a0a0;margin-top:-2px}
.cmd-box{margin-left:3px;width:985px;height:43px;border-top:2px solid #808080;border-left:1px solid #808080;border-bottom:1px solid #ccc;background:#fff;flex:none}
.cmd-line{padding-left:2px;white-space:nowrap;font-size:14px;letter-spacing:.6px;color:#111}
.cmd-hist{height:21px;line-height:13px;border-bottom:1px solid #999}
.cmd-now{height:19px;line-height:19px;display:flex;justify-content:space-between}
.hscroll{width:20px;height:19px;margin-right:3px;background:#f0f0f0;display:flex;align-items:center;justify-content:center;flex:none}
.rgt{width:0;height:0;border-top:4px solid transparent;border-bottom:4px solid transparent;border-left:4px solid #777}
.cmd-scroll{width:15px;height:23px;flex:none;margin-top:2px;display:flex;flex-direction:column;align-items:center;justify-content:space-around;background:#f0f0f0}
.up{width:0;height:0;border-left:4px solid transparent;border-right:4px solid transparent;border-bottom:4px solid #777}
.down{width:0;height:0;border-left:4px solid transparent;border-right:4px solid transparent;border-top:4px solid #777}

.status{height:21px;display:flex;align-items:flex-start;padding:2px 0 0 6px;border-top:1px solid #aaa;background:#f0eeee;gap:4px}
.coords{width:249px;height:18px;line-height:16px;flex:none;margin-top:-1px;border:1px solid #999;background:#eeeeee;font-family:"Liberation Mono",monospace;font-size:10px;padding-left:1px;margin-right:2px;letter-spacing:-.1px}
.sb{height:17px;line-height:16px;text-align:center;font-size:13px;background:#fafafa;flex:none;border-right:1px solid #bbb;white-space:nowrap;overflow:hidden}
.sb.mono{font-size:10px}
.sb.on{border:1px solid #000;border-bottom:0;border-right-color:#bbb;background:#f6f6f6}
.s27{width:27px;margin-right:1px}.s52{width:52px}.s28{width:28px}.s22{width:22px}
.tray{margin-left:auto;width:64px;height:18px;margin-top:-1px;display:flex;align-items:center;gap:1px;padding-left:6px;border-left:1px solid #aaa;border-top:1px solid #ccc;flex:none;margin-right:1px}
.tr-x{fill:none;stroke:#6f88a8;stroke-width:1.500}
.lockb2{fill:none;stroke:#5f4a10;stroke-width:2}
.st-arr{margin:9px 0 0 0}
.clean{width:17px;height:16px;border:2px solid #3f6d9f;background:#bcd0e4;flex:none;margin:0 4px 0 6px}

.taskbar{height:41px;display:flex;align-items:stretch;flex:none;
  background:linear-gradient(104deg,rgba(255,255,255,0) 78%,rgba(255,255,255,.22) 80%,rgba(255,255,255,0) 82.500%),linear-gradient(90deg,#2c8bbd,#2e90c4 35%,#1f6aa5 50%,#164a86 70%,#17518d 100%)}
.pins{display:flex;align-items:stretch;flex:none;width:666px}
.pin{display:flex;align-items:center;justify-content:center;flex:none}
.p-orb{width:56px}.p-g{width:58px}.p-grip{width:16px}.p-fold{width:72px}.p-media{width:46px}.p-ie{width:74px;padding-left:10px}
.orb{width:38px;height:38px}
.pic40{width:40px;height:40px}
.pic32{width:32px;height:32px}
.g-logo{fill:none;stroke:#1e90e8;stroke-width:7}
.ie-e{fill:none;stroke:#fff;stroke-width:2.500}
.ie-orb{fill:none;stroke:#7ed04a;stroke-width:1.500}
.ie-ring{fill:#1f78b8;stroke:#fff;stroke-width:2}
.ie-e2{fill:none;stroke:#fff;stroke-width:3}
.q-ring{fill:none;stroke:#fff;stroke-width:5}
.task{width:58px;flex:none;margin-right:4px;display:flex;align-items:center;justify-content:center;border:1px solid rgba(255,255,255,.35);border-bottom:0;border-radius:2px;background:linear-gradient(rgba(255,255,255,.22),rgba(255,255,255,.08))}
.pins .p-ie + .task{margin-left:1px}
.task-last{background:linear-gradient(#dceffa,#8fc4e2)}
.xue{width:32px;height:32px;border-radius:5px;background:#1c82e6;color:#fff;display:flex;align-items:center;justify-content:center}
.xue-f{font-size:22px;font-family:"Liberation Serif",serif;font-style:italic;line-height:1}
.xue-t{font-size:13px;margin-left:-1px}
.dotgrip{display:block;width:8px;height:32px;flex:none;background-image:radial-gradient(circle,#17324f 1px,transparent 1.200px);background-size:3.500px 3.500px}
.sysbar{flex:1;display:flex;align-items:center;color:#fff;min-width:0}
.dg1{margin-left:1px}
.tb-desk{font-size:12px;width:36px;text-align:center;margin-left:-1px;flex:none}
.tb-f{margin-left:2px}
.tb-j{width:10px;text-align:center;font-size:11px;flex:none}
.tb-more{width:18px;text-align:center;font-size:14px;margin-top:-12px;font-weight:bold;flex:none}
.dg2{margin-left:3px}
.t-kbd{margin-left:8px}
.t-help{margin-left:5px}
.kbdk{stroke:#555;stroke-dasharray:1.500 1;fill:none;stroke-width:1.500}
.q{font-size:13px;font-weight:bold;fill:#fff;text-anchor:middle}
.t-small{width:14px;margin-left:5px;display:flex;flex-direction:column;align-items:center;gap:6px;flex:none}
.dn{width:0;height:0;border-left:4px solid transparent;border-right:4px solid transparent;border-top:4px solid #fff}
.upt{width:0;height:0;flex:none;margin-left:7px;border-left:4px solid transparent;border-right:4px solid transparent;border-bottom:5px solid #fff}
.t-sh{margin-left:10px}
.t-sp{margin-left:5px}
.t-nw{margin-left:8px}
.wth{fill:none;stroke:#fff;stroke-width:2.200}
.clock{width:76px;margin-left:8px;display:flex;flex-direction:column;align-items:center;gap:4px;font-size:13px;line-height:14px;color:#e6eef6;flex:none}
.showdesk{width:13px;height:38px;margin-left:1px;background:linear-gradient(#2a6ea8,#1b5288);border:1px solid #5f8db8;flex:none}

.meter{position:absolute;left:1015px;top:472px;width:11px;height:58px;background:#4a4c50;border-radius:3px 0 0 3px;padding:5px 2px 3px 3px}
.meter-bars{display:block;width:5px;height:100%;background:repeating-linear-gradient(rgba(0,0,0,.5) 0 1px,transparent 1px 2.500px),linear-gradient(#55585c 0 26%,#e8a83a 26% 46%,#c8e05a 46% 70%,#4fe0b8 70%)}

.bubble{position:absolute;left:788px;top:627px;width:185px;height:73px;background:#ffffe1;border:1.500px solid #000;border-radius:15px;padding:7px 8px 0 9px}
.b-tail{position:absolute;left:121px;top:70px;width:24px;height:22px;overflow:visible}
.b-tail-f{fill:#ffffe1}
.b-tail-s{fill:none;stroke:#000;stroke-width:1.500}
.b-head{display:flex;align-items:center;height:17px}
.b-info{width:16px;height:16px;flex:none}
.b-title{margin-left:10px;font-size:12.500px;letter-spacing:.3px}
.b-close{margin-left:auto;width:16px;height:16px;background:#f4f4f0;border:1px solid #888;display:flex;align-items:center;justify-content:center}
.b-close svg{width:10px;height:10px}
.b-x{fill:none;stroke:#000;stroke-width:2.200}
.b-msg{margin:3px 0 0;font-size:12px;line-height:17px;white-space:nowrap;color:#000;padding-left:6px}
.b-link{display:block;font-size:12px;line-height:18px;color:#00f;text-decoration:underline;padding-left:6px}
```
